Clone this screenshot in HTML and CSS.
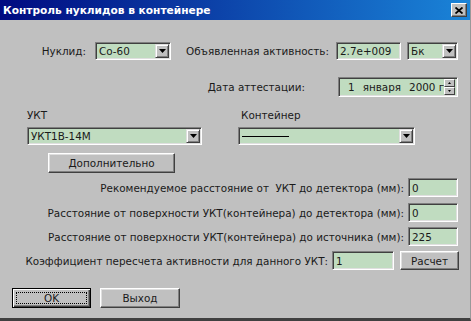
FILE: index.html
```html
<!DOCTYPE html>
<html lang="ru">
<head>
    <meta charset="UTF-8">
    <title>Контроль нуклидов в контейнере</title>
    <link rel="stylesheet" href="styles.css">
</head>
<body>
    <div class="dialog">
        <div class="titlebar">
            <span class="title">Контроль нуклидов в контейнере</span>
            <span class="close-btn">
                <svg width="8" height="7" viewBox="0 0 8 7"><path d="M0.5 0.5L7.5 6.5M7.5 0.5L0.5 6.5" stroke="#000" stroke-width="1.8"/></svg>
            </span>
        </div>

        <div class="client">
            <div class="row row-nuclide">
                <label class="lbl lbl-nuclide">Нуклид:</label>
                <div class="combo combo-nuclide">
                    <span class="combo-text">Co-60</span>
                    <span class="combo-btn"><svg width="7" height="4" viewBox="0 0 7 4"><path d="M0 0H7L3.5 4Z"/></svg></span>
                </div>
                <label class="lbl lbl-activity">Объявленная активность:</label>
                <div class="field field-activity">2.7e+009</div>
                <div class="combo combo-unit">
                    <span class="combo-text">Бк</span>
                    <span class="combo-btn"><svg width="7" height="4" viewBox="0 0 7 4"><path d="M0 0H7L3.5 4Z"/></svg></span>
                </div>
            </div>

            <div class="row row-date">
                <label class="lbl lbl-date">Дата аттестации:</label>
                <div class="datebox">
                    <span class="date-day">1</span>
                    <span class="date-month">января</span>
                    <span class="date-year">2000 г</span>
                    <span class="spin">
                        <span class="spin-btn"><svg width="3" height="2" viewBox="0 0 3 2"><path d="M0 2H3L1.5 0Z"/></svg></span>
                        <span class="spin-btn"><svg width="3" height="2" viewBox="0 0 3 2"><path d="M0 0H3L1.5 2Z"/></svg></span>
                    </span>
                </div>
            </div>

            <div class="columns">
                <div class="col col-ukt">
                    <label class="col-lbl">УКТ</label>
                    <div class="combo">
                        <span class="combo-text">УКТ1В-14М</span>
                        <span class="combo-btn"><svg width="7" height="4" viewBox="0 0 7 4"><path d="M0 0H7L3.5 4Z"/></svg></span>
                    </div>
                </div>
                <div class="col col-container">
                    <label class="col-lbl col-lbl-shift">Контейнер</label>
                    <div class="combo">
                        <span class="combo-text"><span class="dash"></span></span>
                        <span class="combo-btn"><svg width="7" height="4" viewBox="0 0 7 4"><path d="M0 0H7L3.5 4Z"/></svg></span>
                    </div>
                </div>
            </div>

            <button class="btn btn-more">Дополнительно</button>

            <div class="row row-dist first">
                <label class="lbl lbl-dist">Рекомендуемое расстояние от&nbsp; УКТ до детектора (мм):</label>
                <div class="field field-dist">0</div>
            </div>
            <div class="row row-dist second">
                <label class="lbl lbl-dist">Расстояние от поверхности УКТ(контейнера) до детектора (мм):</label>
                <div class="field field-dist">0</div>
            </div>
            <div class="row row-dist">
                <label class="lbl lbl-dist">Расстояние от поверхности УКТ(контейнера) до источника (мм):</label>
                <div class="field field-dist">225</div>
            </div>

            <div class="row row-coef">
                <label class="lbl lbl-coef">Коэффициент пересчета активности для данного УКТ:</label>
                <div class="field field-coef">1</div>
                <button class="btn btn-calc">Расчет</button>
            </div>

            <div class="footer">
                <button class="btn btn-ok"><span class="focus">OK</span></button>
                <button class="btn btn-exit">Выход</button>
            </div>
        </div>
    </div>
</body>
</html>
```

FILE: styles.css
```css
* {
    box-sizing: border-box;
}
html, body {
    margin: 0;
    padding: 0;
}
body {
    background: #c0c0c0;
    font-family: "DejaVu Sans", Verdana, sans-serif;
    font-size: 10.4px;
    color: #1a1a1a;
}
.dialog {
    width: 471px;
    height: 321px;
    display: flex;
    flex-direction: column;
    background: #c0c0c0;
    border-bottom: 3px solid #404040;
    border-right: 1px solid #999;
}
.titlebar {
    height: 20px;
    flex: none;
    display: flex;
    align-items: center;
    justify-content: space-between;
    padding: 0 3px 0 3px;
    background: linear-gradient(to right, #000a80, #1a84d8);
    color: #fff;
    font-size: 10.6px;
    font-weight: bold;
}
.close-btn {
    width: 16px;
    height: 14px;
    display: flex;
    align-items: center;
    justify-content: center;
    background: #c0c0c0;
    border: 1px solid;
    border-color: #fff #404040 #404040 #fff;
    box-shadow: inset -1px -1px #808080;
}
.client {
    flex: 1;
    display: flex;
    flex-direction: column;
}
.row {
    display: flex;
    align-items: center;
}
.lbl {
    text-align: right;
    white-space: nowrap;
    flex: none;
}

/* sunken controls */
.combo, .field, .datebox {
    height: 18px;
    border: 1px solid;
    border-color: #808080 #fff #fff #808080;
    box-shadow: inset 1px 1px #404040, inset -1px -1px #dfdfdf;
    background: #c0dcc0;
    flex: none;
    white-space: nowrap;
}
.combo {
    display: flex;
    align-items: stretch;
    padding: 1px;
}
.combo-text {
    flex: 1;
    display: flex;
    align-items: center;
    padding-left: 2px;
}
.combo-btn {
    width: 14px;
    display: flex;
    align-items: center;
    justify-content: center;
    background: #c0c0c0;
    border: 1px solid;
    border-color: #dfdfdf #404040 #404040 #dfdfdf;
    box-shadow: inset 1px 1px #fff, inset -1px -1px #808080;
}
.field {
    display: flex;
    align-items: center;
    padding-left: 3px;
}

/* first row */
.row-nuclide {
    margin-top: 22px;
    height: 18px;
}
.lbl-nuclide {
    width: 86px;
}
.combo-nuclide {
    margin-left: 9px;
    width: 76px;
}
.lbl-activity {
    width: 158px;
}
.field-activity {
    margin-left: 7px;
    width: 65px;
}
.combo-unit {
    margin-left: 6px;
    width: 51px;
}

/* date row */
.row-date {
    margin-top: 17px;
    height: 20px;
}
.lbl-date {
    width: 305px;
}
.datebox {
    margin-left: 33px;
    width: 120px;
    height: 20px;
    display: flex;
    align-items: center;
    padding: 2px 2px 2px 9px;
}
.date-month {
    margin-left: 8px;
}
.date-year {
    margin-left: 8px;
}
.spin {
    margin-left: auto;
    width: 14px;
    height: 16px;
    display: flex;
    flex-direction: column;
}
.spin-btn {
    flex: 1;
    display: flex;
    align-items: center;
    justify-content: center;
    background: #c0c0c0;
    border: 1px solid;
    border-color: #fff #404040 #404040 #fff;
}

/* УКТ / Контейнер */
.columns {
    margin-top: 12px;
    padding-left: 27px;
    display: flex;
    gap: 36px;
}
.col {
    display: flex;
    flex-direction: column;
    gap: 5px;
}
.col-ukt {
    width: 175px;
}
.col-container {
    width: 177px;
}
.col-lbl {
    line-height: 13px;
}
.col-lbl-shift {
    padding-left: 3px;
}
.dash {
    width: 47px;
    height: 1px;
    background: #000;
}

/* buttons */
.btn {
    font-family: inherit;
    font-size: 10.4px;
    color: #1a1a1a;
    height: 20px;
    padding: 0;
    background: #c0c0c0;
    border: 1px solid;
    border-color: #fff #404040 #404040 #fff;
    box-shadow: inset -1px -1px #808080, inset 1px 1px #dfdfdf;
    cursor: pointer;
}
.btn-more {
    margin: 8px 0 0 48px;
    width: 127px;
    align-self: flex-start;
}

/* distances */
.row-dist {
    height: 19px;
    margin-top: 5px;
}
.row-dist.first {
    margin-top: 5px;
}
.row-dist.second {
    margin-top: 6px;
}
.lbl-dist {
    width: 404px;
}
.field-dist {
    margin-left: 4px;
    width: 50px;
    height: 19px;
}
.row-coef {
    height: 19px;
    margin-top: 5px;
}
.lbl-coef {
    width: 328px;
}
.field-coef {
    margin-left: 4px;
    width: 62px;
    height: 19px;
}
.btn-calc {
    margin-left: 6px;
    width: 59px;
    height: 19px;
}

/* footer */
.footer {
    margin-top: 18px;
    padding-left: 12px;
    display: flex;
    gap: 9px;
}
.btn-ok {
    width: 79px;
    border: 1px solid #000;
    box-shadow: inset 1px 1px #fff, inset -1px -1px #404040, inset -2px -2px #808080;
    padding: 3px;
}
.btn-ok .focus {
    display: flex;
    align-items: center;
    justify-content: center;
    height: 100%;
    border: 1px dotted #000;
}
.btn-exit {
    width: 80px;
}
```
